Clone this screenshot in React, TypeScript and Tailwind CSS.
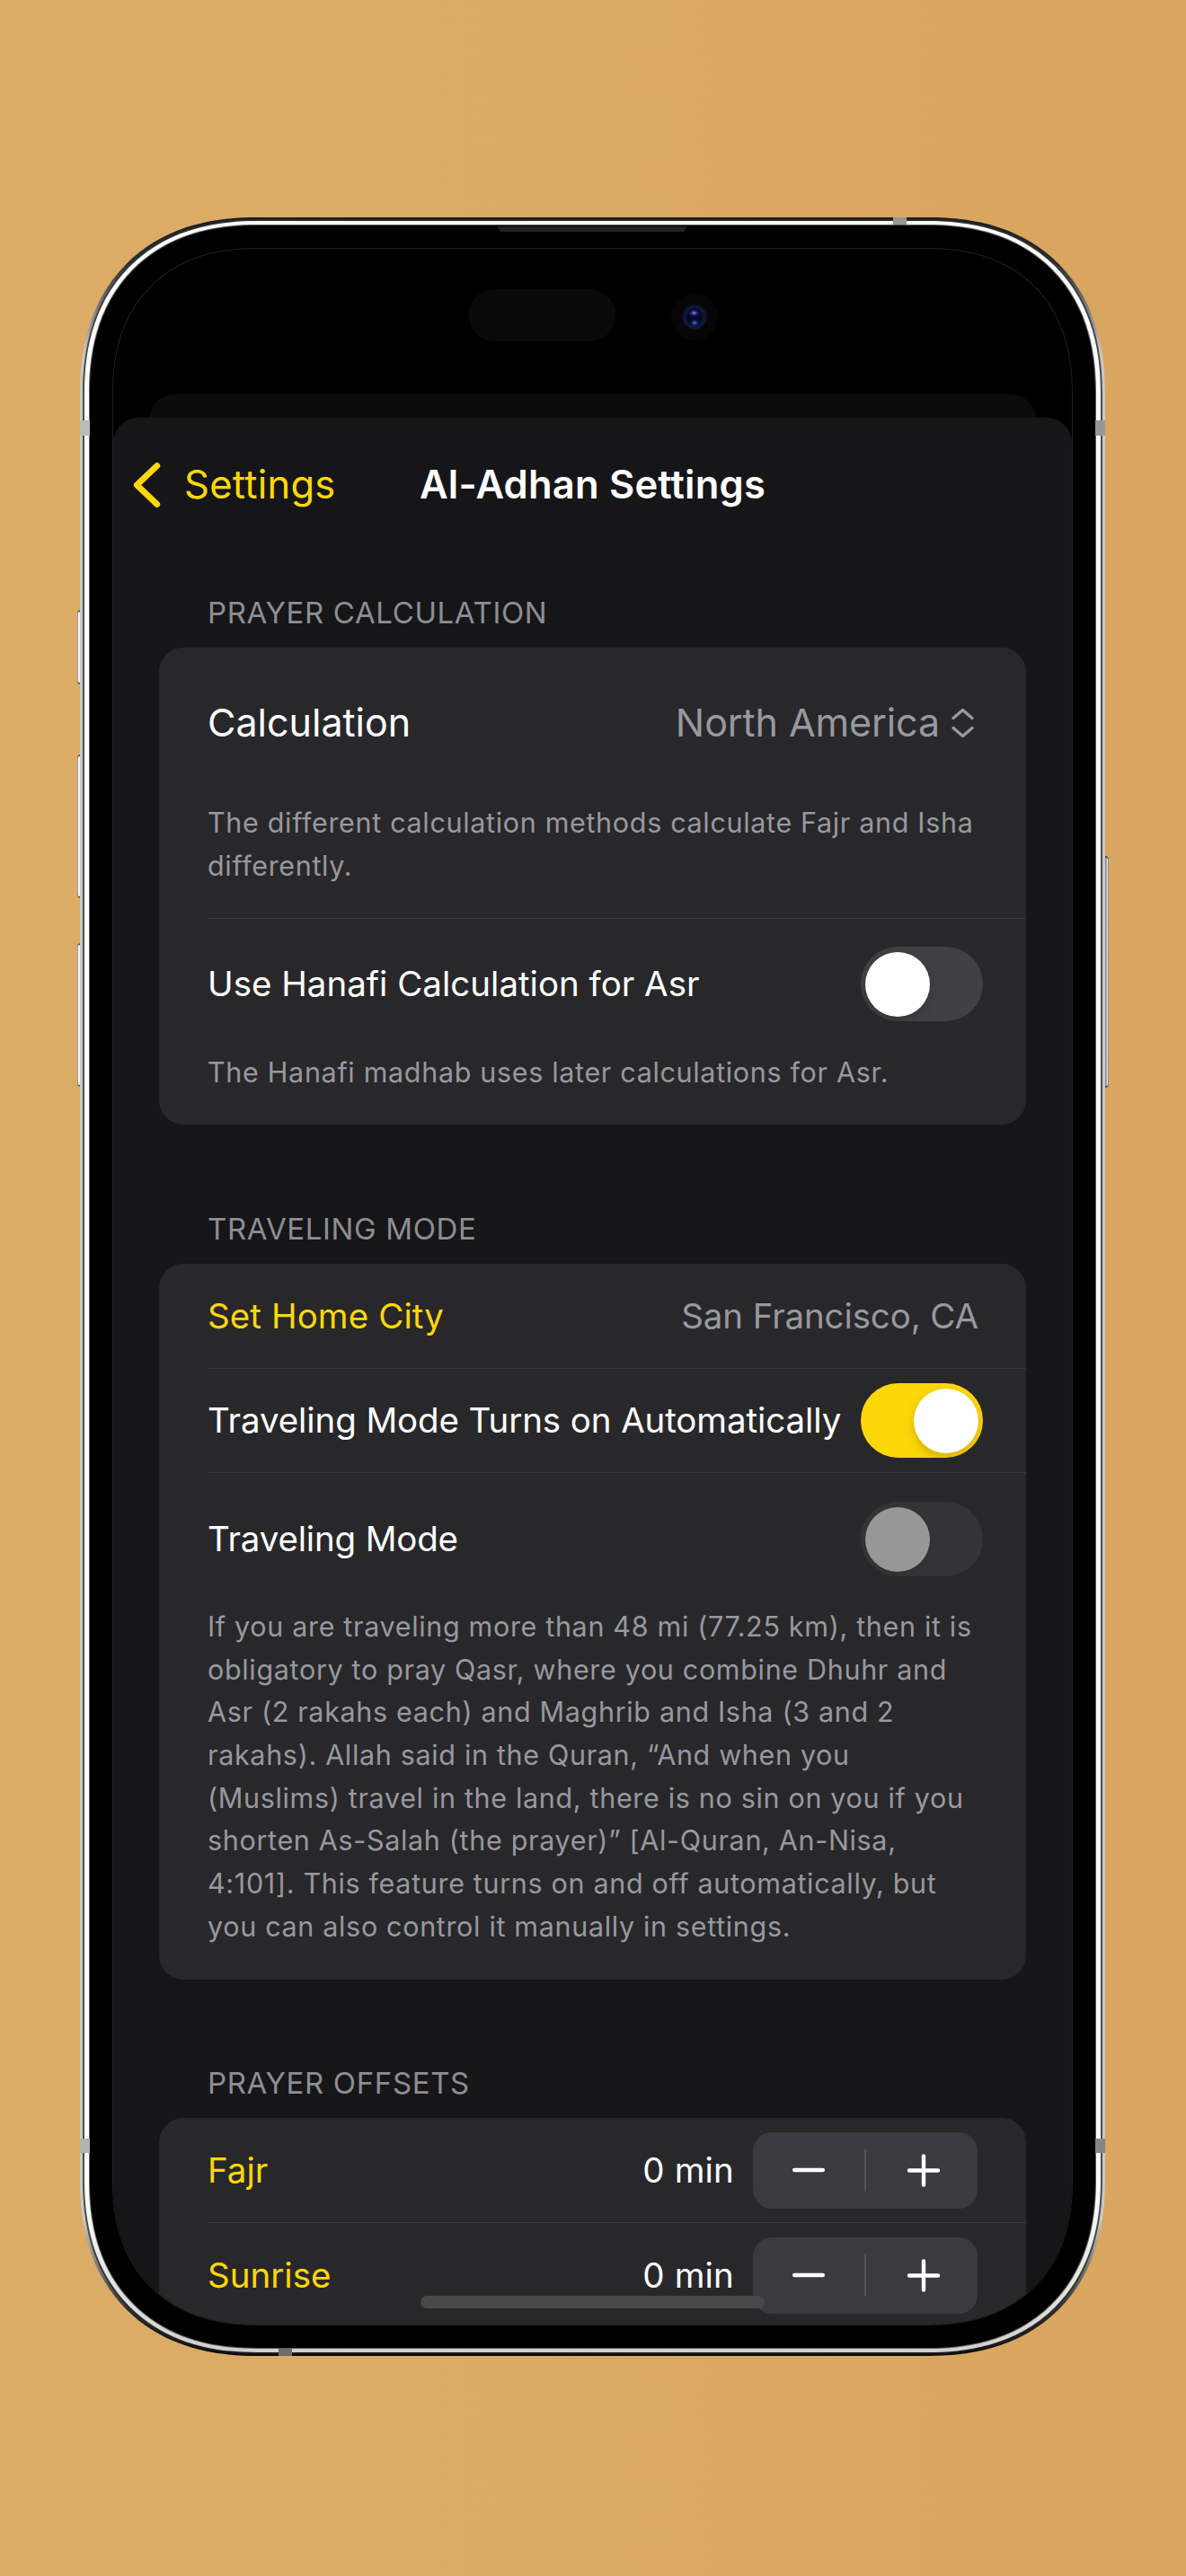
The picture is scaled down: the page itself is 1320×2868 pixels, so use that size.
import React from 'react';

type ToggleState = 'on' | 'off' | 'disabled';

const TRACK: Record<ToggleState, string> = {
  on: 'justify-end bg-[#fed709]',
  off: 'justify-start bg-[#414045]',
  disabled: 'justify-start bg-[#343436]',
};

const KNOB: Record<ToggleState, string> = {
  on: 'bg-white shadow-[0_5px_12px_rgba(0,0,0,0.18)]',
  off: 'bg-white shadow-[0_5px_12px_rgba(0,0,0,0.16)]',
  disabled: 'bg-[#979797] shadow-[0_5px_12px_rgba(0,0,0,0.06)]',
};

// Continuous corner curve, used where the browser knows it; plain arcs otherwise.
const CONTINUOUS = 'supports-[corner-shape:round]:[corner-shape:superellipse(1.18)]';

function Toggle({ state }: { state: ToggleState }) {
  return (
    <div className={`flex h-[83px] w-[136px] shrink-0 items-center overflow-hidden rounded-full px-[5px] ${TRACK[state]}`}>
      <div className={`h-[72px] w-[72px] rounded-full ${KNOB[state]}`} />
    </div>
  );
}

function Stepper() {
  return (
    <div className="flex h-[85px] w-[250px] shrink-0 items-center rounded-[21px] bg-[#3b3a40]">
      <div className="flex flex-1 justify-center">
        <svg width="40" height="40" viewBox="0 0 40 40" className="mb-px">
          <path d="M4.3 20H35.7" stroke="#fff" strokeWidth="4.6" strokeLinecap="round" />
        </svg>
      </div>
      <div className="h-[48px] w-[2px] rounded-full bg-[#525156]" />
      <div className="flex flex-1 justify-center">
        <svg width="40" height="40" viewBox="0 0 40 40" className="ml-[3px]">
          <path d="M4 20.5H36M20 4.5V36.5" stroke="#fff" strokeWidth="4.4" strokeLinecap="round" />
        </svg>
      </div>
    </div>
  );
}

function SectionTitle({ children }: { children: React.ReactNode }) {
  return (
    <h2 className="mb-[19px] h-[40px] pl-[105px] text-[33px] leading-[40px] tracking-[0.63px] text-[#8d8d93]">
      {children}
    </h2>
  );
}

function Card({ children, className = '' }: { children: React.ReactNode; className?: string }) {
  return <div className={`mx-[51px] rounded-[27px] bg-[#28282a] pl-[54px] ${className}`}>{children}</div>;
}

function Divider() {
  return <div className="h-px bg-[#39393b]" />;
}

function Note({ lines, className = '' }: { lines: string[]; className?: string }) {
  return (
    <p className={`text-[30.5px] leading-[47.67px] tracking-[0.67px] whitespace-nowrap text-[#98989f] ${className}`}>
      {lines.map((line) => (
        <span key={line} className="block">
          {line}
        </span>
      ))}
    </p>
  );
}

function ToggleRow({ label, state, className }: { label: string; state: ToggleState; className: string }) {
  return (
    <div className={`flex items-center justify-between pr-[48px] ${className}`}>
      <span className="text-[38.5px] leading-none text-white">{label}</span>
      <Toggle state={state} />
    </div>
  );
}

function OffsetRow({ label }: { label: string }) {
  return (
    <div className="flex h-[116px] items-center pr-[54px] text-[38.5px] leading-none">
      <span className="text-[#fed709]">{label}</span>
      <span className="mr-[21px] ml-auto tracking-[0.15px] text-white">0 min</span>
      <Stepper />
    </div>
  );
}

function Screen() {
  return (
    <div
      className={`relative h-full w-full overflow-hidden rounded-[143px] bg-black supports-[corner-shape:round]:rounded-[160px] ${CONTINUOUS}`}
    >
      {/* Sensor pill and camera */}
      <div className="flex h-[162px] items-start pt-[45px] pl-[396px]">
        <div className="h-[58px] w-[163px] rounded-[28px] bg-[#090909]" />
        <div className="mt-[5px] ml-[62px] flex h-[52px] w-[52px] items-center justify-center rounded-full bg-[#070508]">
          <svg width="28" height="28" viewBox="0 0 28 28">
            <defs>
              <radialGradient id="glowTop">
                <stop offset="0" stopColor="#8f86e8" />
                <stop offset="0.4" stopColor="#342b98" />
                <stop offset="1" stopColor="#150f5a" stopOpacity="0" />
              </radialGradient>
              <radialGradient id="glowBottom">
                <stop offset="0" stopColor="#3b8fb8" />
                <stop offset="0.4" stopColor="#1c2a80" />
                <stop offset="1" stopColor="#150f5a" stopOpacity="0" />
              </radialGradient>
            </defs>
            <circle cx="14" cy="14" r="13.6" fill="#0c1736" />
            <ellipse cx="14" cy="14" rx="8.5" ry="10" fill="#08051f" />
            <ellipse cx="13.5" cy="9.5" rx="7" ry="4.5" fill="url(#glowTop)" />
            <ellipse cx="14" cy="20.5" rx="6" ry="4.5" fill="url(#glowBottom)" />
          </svg>
        </div>
      </div>

      {/* Sheet behind */}
      <div className="mx-[41px] h-[60px] rounded-t-[26px] bg-[#0b0b0b]" />

      <div className="-mt-[34px] h-[2160px] rounded-t-[28px] bg-[#161618]">
        <header className="grid h-[149px] grid-cols-[1fr_auto_1fr] items-center text-[43.5px] leading-none">
          <div className="flex items-center pl-[21px] tracking-[0.25px] text-[#fed709]">
            <svg width="34" height="54" viewBox="0 0 34 54" fill="none" className="mr-[24px]">
              <path d="M27.8 5.5L5.3 27L27.8 48.5" stroke="currentColor" strokeWidth="6.8" strokeLinecap="round" strokeLinejoin="round" />
            </svg>
            Settings
          </div>
          <h1 className="font-semibold tracking-[0.2px] text-white">Al-Adhan Settings</h1>
        </header>

        <div className="pt-[48px]">
          <SectionTitle>PRAYER CALCULATION</SectionTitle>
          <Card className="h-[531px]">
            <div className="flex h-[171px] items-center pr-[57px] pb-[4px] text-[43px] leading-none">
              <span className="text-white">Calculation</span>
              <span className="ml-auto tracking-[-0.1px] text-[#98989f]">North America</span>
              <svg width="27" height="36" viewBox="0 0 27 36" fill="none" className="ml-[12px]">
                <path
                  d="M3 12.5L13.5 3.5L24 12.5M3 23.5L13.5 32.5L24 23.5"
                  stroke="#98989f"
                  strokeWidth="3.4"
                  strokeLinecap="round"
                  strokeLinejoin="round"
                />
              </svg>
            </div>
            <Note
              className="h-[130px]"
              lines={['The different calculation methods calculate Fajr and Isha', 'differently.']}
            />
            <Divider />
            <ToggleRow className="mb-[2px] h-[145px]" label="Use Hanafi Calculation for Asr" state="off" />
            <Note lines={['The Hanafi madhab uses later calculations for Asr.']} />
          </Card>
        </div>

        <div className="pt-[96px]">
          <SectionTitle>TRAVELING MODE</SectionTitle>
          <Card className="h-[797px]">
            <div className="flex h-[116px] items-center justify-between pr-[53px] text-[38.5px] leading-none">
              <span className="tracking-[0.1px] text-[#fed709]">Set Home City</span>
              <span className="tracking-[-0.13px] text-[#98989f]">San Francisco, CA</span>
            </div>
            <Divider />
            <ToggleRow className="h-[115px] tracking-[-0.1px]" label="Traveling Mode Turns on Automatically" state="on" />
            <Divider />
            <ToggleRow className="h-[147px] tracking-[-0.17px]" label="Traveling Mode" state="disabled" />
            <Note
              lines={[
                'If you are traveling more than 48 mi (77.25 km), then it is',
                'obligatory to pray Qasr, where you combine Dhuhr and',
                'Asr (2 rakahs each) and Maghrib and Isha (3 and 2',
                'rakahs). Allah said in the Quran, “And when you',
                '(Muslims) travel in the land, there is no sin on you if you',
                'shorten As-Salah (the prayer)” [Al-Quran, An-Nisa,',
                '4:101]. This feature turns on and off automatically, but',
                'you can also control it manually in settings.',
              ]}
            />
          </Card>
        </div>

        <div className="pt-[95px]">
          <SectionTitle>PRAYER OFFSETS</SectionTitle>
          <Card className="h-[300px]">
            <OffsetRow label="Fajr" />
            <Divider />
            <OffsetRow label="Sunrise" />
            <Divider />
          </Card>
        </div>
      </div>

      {/* Home indicator */}
      <div className="absolute bottom-[18px] left-[342px] h-[14px] w-[383px] rounded-full bg-[#484848]" />
    </div>
  );
}

function SideButton({ className }: { className: string }) {
  return <div className={`absolute w-[6px] border-y-2 border-[#555] ${className}`} />;
}

export default function App() {
  return (
    <main className="h-[2868px] w-[1320px] overflow-hidden bg-linear-to-r from-[#dcad67] to-[#d9a55f] pt-[242px] pl-[89px] font-[Inter,sans-serif]">
      <div className="relative h-[2381px] w-[1141px]">
        <SideButton className="top-[437px] -left-[3px] h-[83px] rounded-l-[4px] bg-[linear-gradient(90deg,#777_0px,#f4f4f2_1.5px)]" />
        <SideButton className="top-[598px] -left-[3px] h-[160px] rounded-l-[4px] bg-[linear-gradient(90deg,#777_0px,#f4f4f2_1.5px)]" />
        <SideButton className="top-[808px] -left-[3px] h-[160px] rounded-l-[4px] bg-[linear-gradient(90deg,#777_0px,#f4f4f2_1.5px)]" />
        <SideButton className="top-[711px] -right-[4px] h-[258px] rounded-r-[4px] bg-[linear-gradient(270deg,#666_0px,#dcdedb_1.5px,#8c928e_3px)]" />

        {/* Steel frame, built from concentric bands */}
        <div
          className={`relative h-full w-full rounded-[178px] bg-[linear-gradient(180deg,#1d1d1d_0px,#2c2c2c_50px,#c9c9c9_150px,#c9c9c9_2230px,#2c2c2c_2330px,#0c0c0c_2381px)] px-[3px] py-[2px] supports-[corner-shape:round]:rounded-[196px] ${CONTINUOUS}`}
        >
          <div
            className={`h-full w-full rounded-[176px] bg-[linear-gradient(180deg,#2a2a2a_0px,#4e4e4c_150px,#4e4e4c_2230px,#1a1a1a_2377px)] px-[2px] py-[2px] supports-[corner-shape:round]:rounded-[194px] ${CONTINUOUS}`}
          >
            <div
              className={`h-full w-full rounded-[174px] bg-[linear-gradient(180deg,#fbfbf9_0px,#fbfbf9_2200px,#cfcfcb_2373px)] px-[5px] py-[4px] supports-[corner-shape:round]:rounded-[192px] ${CONTINUOUS}`}
            >
              <div
                className={`h-full w-full rounded-[169px] bg-[#5a5a58] p-px supports-[corner-shape:round]:rounded-[187px] ${CONTINUOUS}`}
              >
                <div
                  className={`h-full w-full rounded-[168px] bg-black p-[25px] supports-[corner-shape:round]:rounded-[186px] ${CONTINUOUS}`}
                >
                  <div
                    className={`h-full w-full rounded-[144px] bg-[#202020] p-px supports-[corner-shape:round]:rounded-[161px] ${CONTINUOUS}`}
                  >
                    <Screen />
                  </div>
                </div>
              </div>
            </div>
          </div>
        </div>

        {/* Antenna bands */}
        <div className="absolute top-[226px] left-0 h-[17px] w-[11px] bg-[#bcbcbc]" />
        <div className="absolute top-[226px] right-0 h-[17px] w-[11px] bg-[#989898]" />
        <div className="absolute top-[2139px] left-0 h-[16px] w-[11px] bg-[#b2b2b0]" />
        <div className="absolute top-[2139px] right-0 h-[16px] w-[11px] bg-[#858583]" />
        <div className="absolute top-0 left-[905px] h-[8px] w-[15px] bg-[#969696]" />
        <div className="absolute bottom-0 left-[221px] h-[8px] w-[15px] bg-[#6c6c6a]" />

        {/* Earpiece slot */}
        <div className="absolute top-[10px] left-[464px] h-[6px] w-[212px] bg-[#222] [clip-path:polygon(0_0,100%_0,calc(100%-4px)_100%,4px_100%)]" />
      </div>
    </main>
  );
}
